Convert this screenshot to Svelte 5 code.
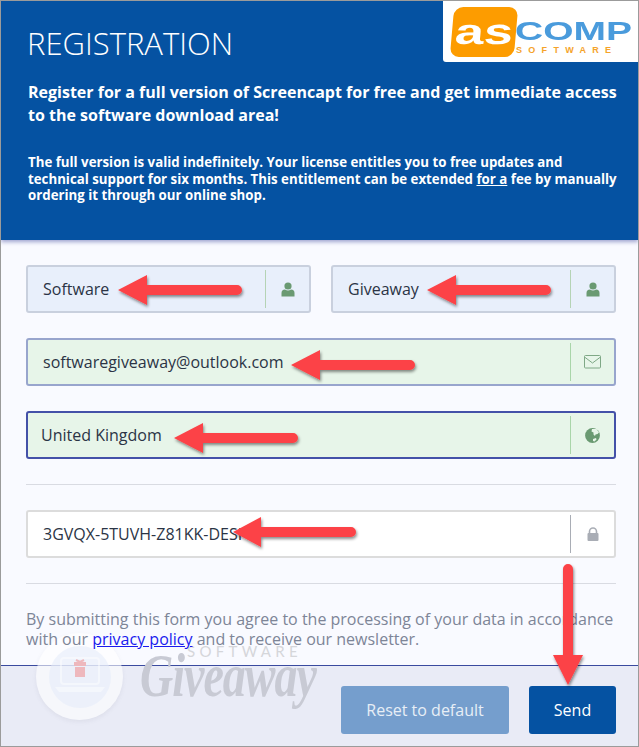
<script>
	const arrows = [
		'M118 290 L147 275 L147 285 L237 285 A5 5 0 0 1 237 295 L147 295 L147 305 Z',
		'M427 290 L456 275 L456 285 L546 285 A5 5 0 0 1 546 295 L456 295 L456 305 Z',
		'M291 365 L320 350 L320 360 L410 360 A5 5 0 0 1 410 370 L320 370 L320 380 Z',
		'M174 438 L203 423 L203 433 L293 433 A5 5 0 0 1 293 443 L203 443 L203 453 Z',
		'M233 532 L261 517 L261 527 L351 527 A5 5 0 0 1 351 537 L261 537 L261 547 Z',
		'M568 685 L553 655 L563 655 L563 569 A5 5 0 0 1 573 569 L573 655 L583 655 Z'
	];
</script>

{#snippet user()}
	<svg width="14" height="15" viewBox="0 0 14 15">
		<circle cx="7" cy="4" r="3.6" fill="#6a9a72" />
		<path d="M0.5 14.5 V11 Q0.5 8 4 7.6 Q7 9.6 10 7.6 Q13.5 8 13.5 11 V14.5 Z" fill="#6a9a72" />
	</svg>
{/snippet}

{#snippet mail()}
	<svg width="17" height="14" viewBox="0 0 17 14" fill="none" stroke="#7fa886">
		<rect x="0.5" y="0.5" width="16" height="12.5" rx="1" />
		<path d="M0.5 2 L8.5 8 L16.5 2" />
	</svg>
{/snippet}

{#snippet globe()}
	<svg width="15" height="15" viewBox="0 0 15 15">
		<circle cx="7.5" cy="7.5" r="7.4" fill="#6a9a72" />
		<path d="M7 1 L11.5 1 L14 4.5 L12.5 6 L10.5 6.5 L10 8 L8.5 6.5 L8.5 4.5 L6.5 3.5 Z M8 11 L11 10 L11.5 11.5 L9.5 13.5 L8 13 Z" fill="#e7f5e9" />
	</svg>
{/snippet}

{#snippet lock()}
	<svg width="12" height="14" viewBox="0 0 12 14">
		<path d="M2.5 7 V4.5 A3.5 3.5 0 0 1 9.5 4.5 V7" fill="none" stroke="#a9adb5" stroke-width="1.6" />
		<rect x="0.5" y="6" width="11" height="8" rx="1" fill="#a9adb5" />
	</svg>
{/snippet}

<div class="window">
	<header>
		<div class="logo">
			<div class="badge"><span>as</span></div>
			<div class="brand">
				<span class="comp">COMP</span>
				<span class="soft">SOFTWARE</span>
			</div>
		</div>
		<h1>REGISTRATION</h1>
		<p class="lead">Register for a full version of Screencapt for free and get immediate access to the software download area!</p>
		<p class="small">The full version is valid indefinitely. Your license entitles you to free updates and technical support for six months. This entitlement can be extended <u>for a</u> fee by manually ordering it through our online shop.</p>
	</header>

	<form>
		<div class="row">
			<div class="field name">
				<input value="Software" readonly />
				<span class="addon">{@render user()}</span>
			</div>
			<div class="field name">
				<input value="Giveaway" readonly />
				<span class="addon">{@render user()}</span>
			</div>
		</div>
		<div class="field valid">
			<input value="softwaregiveaway@outlook.com" readonly />
			<span class="addon">{@render mail()}</span>
		</div>
		<div class="field valid focus">
			<input class="select" value="United Kingdom" readonly />
			<span class="addon">{@render globe()}</span>
		</div>
		<hr />
		<div class="field key">
			<input value="3GVQX-5TUVH-Z81KK-DESI" readonly />
			<span class="addon">{@render lock()}</span>
		</div>
		<hr />
		<p class="terms">By submitting this form you agree to the processing of your data in accordance with our <a href="#top">privacy policy</a> and to receive our newsletter.</p>
	</form>

	<footer>
		<button type="button" class="reset">Reset to default</button>
		<button type="button" class="send">Send</button>
	</footer>

	<!-- site watermark, sits over the form and footer -->
	<div class="mark">
		<div class="disc">
			<svg width="62" height="62" viewBox="0 0 62 62">
				<circle cx="31" cy="31" r="31" fill="#e4ebfa" opacity="0.55" />
				<rect x="12" y="12" width="38" height="26" rx="3" fill="none" stroke="#fff" stroke-width="2" opacity="0.45" />
				<path d="M6 41 H56 L52 46 H10 Z" fill="#fff" opacity="0.45" />
				<rect x="25" y="16" width="12" height="4" fill="#eeb8bd" />
				<rect x="26" y="21" width="10" height="10" fill="#eeb8bd" />
				<path d="M27 14 L31 16 L35 14" fill="none" stroke="#eeb8bd" stroke-width="2" />
			</svg>
		</div>
		<span class="mark-soft">SOFTWARE</span>
		<span class="mark-give">Giveaway</span>
	</div>

	<svg class="arrows" width="639" height="747" viewBox="0 0 639 747">
		<defs>
			<filter id="drop" x="-20%" y="-20%" width="140%" height="140%">
				<feDropShadow dx="1" dy="2" stdDeviation="1.5" flood-color="#000" flood-opacity="0.45" />
			</filter>
		</defs>
		{#each arrows as d}
			<path {d} fill="#fc4246" filter="url(#drop)" />
		{/each}
	</svg>
</div>

<style>
	:global(body) {
		background: #fff;
	}

	.window {
		position: relative;
		box-sizing: border-box;
		width: 639px;
		height: 747px;
		display: flex;
		flex-direction: column;
		border: 1px solid #9b9b9b;
		background: #f9faff;
		font-family: 'Open Sans', sans-serif;
		overflow: hidden;
	}

	header {
		position: relative;
		box-sizing: border-box;
		height: 239px;
		flex: none;
		padding: 23px 15px 0 26px;
		background: #0552a2;
		color: #fff;
		box-shadow: 0 2px 4px rgba(50, 60, 150, 0.45);
	}

	.logo {
		position: absolute;
		top: 0;
		right: 0;
		width: 195px;
		height: 61px;
		display: flex;
		background: #fff;
		border-bottom-left-radius: 3px;
	}

	.badge {
		width: 64px;
		height: 50px;
		flex: none;
		margin: 6px 0 0 9px;
		border-radius: 9px;
		background: #fd9c00;
		color: #fff;
		font: bold 36px/50px 'Liberation Sans', sans-serif;
		text-align: center;
		transform: skewX(-5deg);
		overflow: hidden;
	}

	.badge span {
		display: inline-block;
		transform: scaleX(1.45);
	}

	.brand {
		display: flex;
		flex-direction: column;
	}

	.comp {
		display: block;
		margin: 16px 0 0 -1px;
		color: #4a9bdc;
		font: bold 26px/28px 'Liberation Sans', sans-serif;
		transform: scaleX(1.5);
		transform-origin: left;
	}

	.soft {
		color: #f5a32a;
		font: bold 9px/11px 'Liberation Sans', sans-serif;
		letter-spacing: 6.3px;
	}

	h1 {
		margin: 0;
		font-size: 31px;
		font-weight: 300;
		line-height: 38px;
	}

	.lead {
		margin: 19px 0 0 1px;
		font-size: 16px;
		font-weight: 700;
		line-height: 23px;
	}

	.small {
		margin: 27px 0 0 1px;
		font-size: 13.28px;
		font-weight: 700;
		line-height: 16.5px;
	}

	form {
		flex: 1;
		display: flex;
		flex-direction: column;
		gap: 25px;
		padding: 25px 22px 0 25px;
	}

	.row {
		display: flex;
		gap: 20px;
	}

	.field {
		box-sizing: border-box;
		height: 48px;
		display: flex;
		align-items: stretch;
		padding: 3px 0;
		border: 2px solid #dcdcdc;
		border-radius: 3px;
		background: #fff;
	}

	.name {
		flex: 1;
		min-width: 0;
		border-color: #c9d0de;
		background: #e8effb;
	}

	.valid {
		border-color: #98a5cd;
		background: #e7f5e9;
	}

	.focus {
		border-color: #4451a8;
	}

	input {
		flex: 1;
		min-width: 0;
		padding: 0 0 0 15px;
		border: 0;
		outline: 0;
		background: transparent;
		color: #2b3445;
		font: 16px 'Open Sans', sans-serif;
	}

	.select {
		padding-left: 13px;
	}

	.addon {
		box-sizing: border-box;
		width: 44px;
		flex: none;
		display: flex;
		align-items: center;
		justify-content: center;
		border-left: 1px solid #a9d5a9;
	}

	.name .addon {
		border-left-color: #b5d3b5;
	}

	.key .addon {
		border-left-color: #a9adb5;
	}

	hr {
		width: 100%;
		height: 1px;
		margin: 0;
		border: 0;
		background: #d9dbe2;
	}

	.terms {
		position: relative;
		z-index: 2;
		margin: 0;
		color: #7d8597;
		font-size: 16px;
		line-height: 20px;
	}

	.terms a {
		color: #1a1aee;
	}

	footer {
		box-sizing: border-box;
		height: 81px;
		flex: none;
		display: flex;
		justify-content: flex-end;
		align-items: flex-start;
		gap: 20px;
		padding: 20px 22px 0 0;
		border-top: 1px solid #3a4a9f;
		background: #e9ebf6;
	}

	button {
		height: 48px;
		border: 0;
		border-radius: 3px;
		color: #fff;
		font: 16px 'Open Sans', sans-serif;
	}

	.reset {
		width: 168px;
		background: #759ecd;
		color: #e7eef6;
	}

	.send {
		width: 87px;
		background: #0552a2;
	}

	.mark {
		position: absolute;
		z-index: 1;
		left: 35px;
		top: 632px;
		width: 290px;
		height: 95px;
		pointer-events: none;
	}

	.disc {
		width: 87px;
		height: 87px;
		display: flex;
		align-items: center;
		justify-content: center;
		border-radius: 50%;
		background: rgba(255, 255, 255, 0.6);
		box-shadow: 0 2px 4px rgba(120, 120, 140, 0.1);
	}

	.mark-soft {
		position: absolute;
		left: 151px;
		top: 10px;
		color: #d5d6da;
		font: 15px/16px 'Lato', sans-serif;
		letter-spacing: 4.3px;
	}

	.mark-give {
		position: absolute;
		left: 104px;
		top: 26px;
		color: #c8cad4;
		font: italic bold 46px/52px 'Liberation Serif', serif;
		letter-spacing: -1px;
		transform: scaleY(1.35);
		transform-origin: left bottom;
	}

	.arrows {
		position: absolute;
		z-index: 3;
		left: -1px;
		top: -1px;
		pointer-events: none;
	}
</style>
